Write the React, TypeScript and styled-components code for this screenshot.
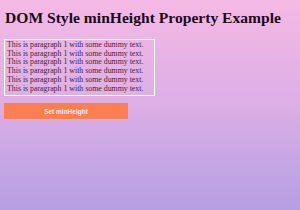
import React, { useState } from "react";
import styled, { createGlobalStyle } from "styled-components";

const GlobalStyle = createGlobalStyle`
  html, body {
    margin: 0;
    padding: 0;
    height: 100%;
  }
  body {
    background: linear-gradient(to bottom, #f5b9e4 0%, #dcaee6 50%, #b59fe1 100%);
    font-family: "Liberation Serif", "Times New Roman", serif;
  }
`;

const Page = styled.div`
  width: 300px;
  height: 210px;
  padding: 9px 4px 0 4px;
  box-sizing: border-box;
  display: flex;
  flex-direction: column;
  align-items: flex-start;
`;

const Title = styled.h1`
  margin: 0 0 0 1px;
  font-family: "Liberation Serif", "Times New Roman", serif;
  font-size: 15.6px;
  font-weight: bold;
  line-height: 18px;
  color: #1a0a1a;
`;

const Box = styled.div<{ $minHeight: number }>`
  margin-top: 12px;
  width: 151px;
  box-sizing: border-box;
  border: 1px solid #ffffff;
  padding: 1px 2px 2px 2px;
  min-height: ${(p) => p.$minHeight}px;
`;

const Para = styled.p`
  margin: 0;
  font-family: "Liberation Serif", "Times New Roman", serif;
  font-size: 7.85px;
  line-height: 8.7px;
  color: #3a2640;
  white-space: nowrap;
`;

const SetButton = styled.button`
  margin-top: 7px;
  width: 124px;
  height: 16px;
  border: none;
  background: #fd7f4f;
  color: #fbeef0;
  font-family: "Liberation Sans", Arial, sans-serif;
  font-size: 6.5px;
  font-weight: bold;
  padding: 0;
  cursor: pointer;
`;

const App: React.FC = () => {
  const [minHeight, setMinHeight] = useState(0);
  const lines = Array.from({ length: 6 });

  return (
    <>
      <GlobalStyle />
      <Page>
        <Title>DOM Style minHeight Property Example</Title>
        <Box $minHeight={minHeight}>
          {lines.map((_, i) => (
            <Para key={i}>This is paragraph 1 with some dummy text.</Para>
          ))}
        </Box>
        <SetButton type="button" onClick={() => setMinHeight(120)}>
          Set minHeight
        </SetButton>
      </Page>
    </>
  );
};

export default App;
